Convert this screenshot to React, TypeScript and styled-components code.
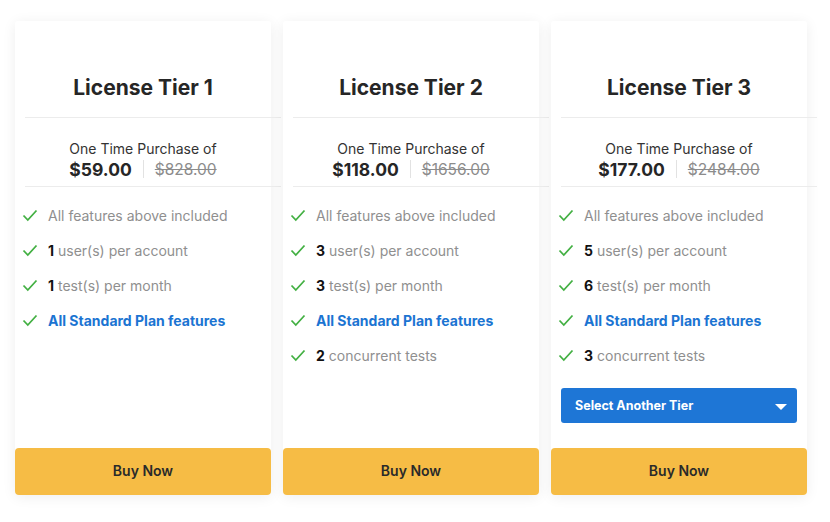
import React from 'react'
import styled, { createGlobalStyle } from 'styled-components'

const GlobalStyle = createGlobalStyle`
  body {
    margin: 0;
    background: #ffffff;
    font-family: Inter, "Open Sans", sans-serif;
  }
`

const Page = styled.div`
  display: flex;
  gap: 12px;
  padding: 21px 15px;
`

const Card = styled.div`
  width: 256px;
  height: 474px;
  display: flex;
  flex-direction: column;
  background: #fff;
  border-radius: 3px;
  box-shadow: 0 2px 14px rgba(0, 0, 0, 0.07);
`

const Title = styled.h2`
  margin: 0;
  padding: 54px 0 17px;
  font-size: 21px;
  line-height: 25px;
  font-weight: 700;
  color: #262626;
  text-align: center;
`

const Divider = styled.div`
  height: 1px;
  margin-left: 10px;
  width: 100%;
  background: #ececec;
`

const PriceBlock = styled.div`
  padding: 21px 0 7px;
  text-align: center;
  color: #333;
`

const PriceLabel = styled.div`
  font-size: 14px;
  line-height: 20px;
`

const PriceRow = styled.div`
  display: flex;
  justify-content: center;
  align-items: center;
  height: 20px;
`

const Price = styled.span`
  font-size: 17.5px;
  font-weight: 700;
  color: #262626;
`

const Sep = styled.span`
  width: 1px;
  height: 18px;
  background: #e2e2e2;
  margin: 0 11px;
`

const OldPrice = styled.span`
  font-size: 15.5px;
  color: #8c8c8c;
  text-decoration: line-through;
`

const Features = styled.ul`
  list-style: none;
  margin: 0;
  padding: 11px 7px 0;
`

const Feature = styled.li<{ $link?: boolean }>`
  display: flex;
  align-items: center;
  gap: 10px;
  height: 35px;
  font-size: 14px;
  color: ${p => (p.$link ? '#1b74d2' : '#8f8f8f')};
  font-weight: ${p => (p.$link ? 700 : 400)};

  b {
    color: #111;
    font-weight: 700;
  }
`

const Select = styled.div`
  margin: 15px 10px 0;
  height: 35px;
  display: flex;
  align-items: center;
  justify-content: space-between;
  padding: 0 10px 0 14px;
  background: #1e76d6;
  border-radius: 3px;
  color: #fff;
  font-size: 12.5px;
  font-weight: 700;
`

const Caret = styled.span`
  width: 0;
  height: 0;
  border-left: 6px solid transparent;
  border-right: 6px solid transparent;
  border-top: 6px solid #fff;
  margin-top: 3px;
`

const BuyButton = styled.button`
  margin-top: auto;
  height: 47px;
  padding: 0 0 2px;
  border: 0;
  border-radius: 4px;
  background: #f6bc45;
  color: #2a2a2a;
  font-family: inherit;
  font-size: 14px;
  font-weight: 600;
`

const Check = () => (
  <svg width="16" height="13" viewBox="0 0 16 13">
    <path d="M1.5 6.5 L5.8 11 L14.5 1.5" fill="none" stroke="#43b043" strokeWidth="1.8" />
  </svg>
)

const tiers = [
  { n: 1, price: '$59.00', old: '$828.00', users: 1, tests: 1, concurrent: 0 },
  { n: 2, price: '$118.00', old: '$1656.00', users: 3, tests: 3, concurrent: 2 },
  { n: 3, price: '$177.00', old: '$2484.00', users: 5, tests: 6, concurrent: 3 },
]

export default function App() {
  return (
    <>
      <GlobalStyle />
      <Page>
        {tiers.map(t => (
          <Card key={t.n}>
            <Title>License Tier {t.n}</Title>
            <Divider />
            <PriceBlock>
              <PriceLabel>One Time Purchase of</PriceLabel>
              <PriceRow>
                <Price>{t.price}</Price>
                <Sep />
                <OldPrice>{t.old}</OldPrice>
              </PriceRow>
            </PriceBlock>
            <Divider />
            <Features>
              <Feature><Check />All features above included</Feature>
              <Feature><Check /><span><b>{t.users}</b> user(s) per account</span></Feature>
              <Feature><Check /><span><b>{t.tests}</b> test(s) per month</span></Feature>
              <Feature $link><Check />All Standard Plan features</Feature>
              {t.concurrent > 0 && (
                <Feature><Check /><span><b>{t.concurrent}</b> concurrent tests</span></Feature>
              )}
            </Features>
            {t.n === 3 && (
              <Select>
                Select Another Tier
                <Caret />
              </Select>
            )}
            <BuyButton>Buy Now</BuyButton>
          </Card>
        ))}
      </Page>
    </>
  )
}
